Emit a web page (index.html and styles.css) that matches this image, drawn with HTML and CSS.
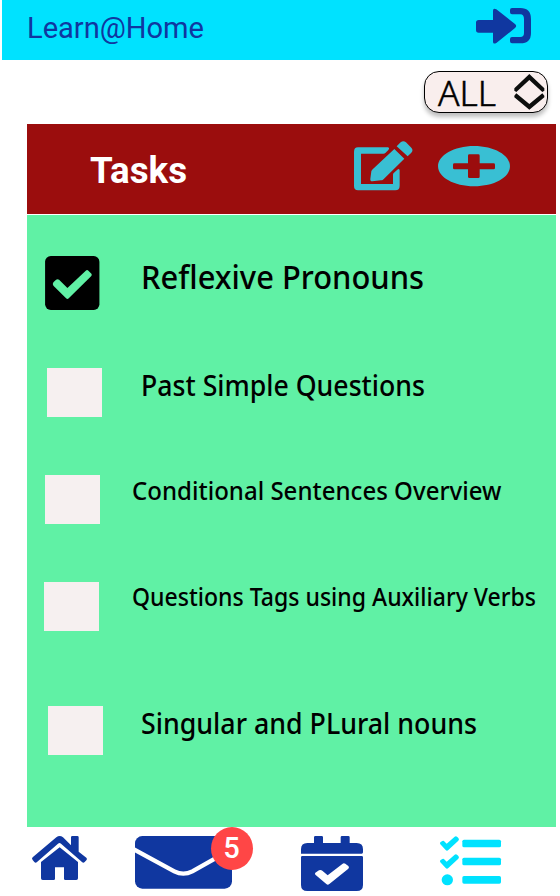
FILE: index.html
```html
<!DOCTYPE html>
<html lang="en">
<head>
<meta charset="utf-8">
<title>Learn@Home</title>
<link rel="stylesheet" href="styles.css">
</head>
<body>
<div class="app">
  <header class="topbar">
    <svg class="brand" width="178" height="40"><text x="-1" y="28" textLength="177" lengthAdjust="spacingAndGlyphs">Learn@Home</text></svg>
    <svg class="login" viewBox="198 24 165 108" width="55" height="36"><path d="M206 60H249V33Q249 22 259 28L315 72Q322 78 315 84L259 129Q249 134 249 125V98H206Q198 98 198 90V68Q198 60 206 60Z"/><path d="M306 24H331Q363 24 363 57V99Q363 130 331 130H306Q300 130 300 124V117Q300 111 306 111H331Q342 111 342 99V57Q342 43 331 43H306Q300 43 300 37V30Q300 24 306 24Z"/></svg>
  </header>
  <div class="filter-row">
    <button class="filter">
      <svg class="filter-label" width="60" height="40"><text x="1" y="34" textLength="58" lengthAdjust="spacingAndGlyphs">ALL</text></svg>
      <svg class="sort" viewBox="311 221 93 107" width="31" height="35.7"><path d="M312 264L357 221L402 264V271L396 275L357 239L318 275L312 271ZM312 286L318 279L357 311L396 279L402 286V291L357 328L312 291Z"/></svg>
    </button>
  </div>
  <main class="panel">
    <div class="panel-head">
      <svg class="title" width="100" height="50"><text x="-1" y="36" textLength="97" lengthAdjust="spacingAndGlyphs">Tasks</text></svg>
      <svg class="edit" viewBox="42 62 177 148" width="59" height="49.3"><path d="M54 81H144Q150 84 145 89L136 98Q134 100 130 100H63V191H159V163Q159 159 162 157L172 148Q177 144 179 150V196Q179 210 166 210H54Q42 210 42 197V94Q42 81 54 81Z"/><path d="M163 86L193 115L129 178Q127 180 123 180L97 183Q90 183 91 175L94 153Q95 150 98 147Z"/><path d="M170 78L182 66Q190 59 198 66L214 82Q221 89 214 97L203 108Z"/></svg>
      <svg class="add" viewBox="294 77 216 121" width="72" height="40.3"><path fill-rule="evenodd" d="M402 77C462 77 510 104 510 138S462 198 402 198S294 171 294 138S342 77 402 77ZM388 102Q384 102 384 106V129H343Q339 129 339 133V143Q339 147 343 147H384V169Q384 173 388 173H415Q419 173 419 169V147H461Q465 147 465 143V133Q465 129 461 129H419V106Q419 102 415 102Z"/></svg>
    </div>
    <ul class="tasks">
      <li class="task task-1"><svg class="checked" viewBox="76 408 163 162" width="54.5" height="54"><rect x="76" y="408" width="163" height="162" rx="17"/><path d="M101 487L109 479Q113 476 118 479L143 504L198 452Q202 448 206 452L215 461Q218 465 214 469L147 535Q143 539 139 535L101 497Q97 492 101 487Z"/></svg><svg class="label" width="290" height="49"><text x="0" y="33" textLength="283" lengthAdjust="spacingAndGlyphs">Reflexive Pronouns</text></svg></li>
      <li class="task task-2"><span class="box"></span><svg class="label" width="290" height="49"><text x="1" y="28" textLength="284" lengthAdjust="spacingAndGlyphs">Past Simple Questions</text></svg></li>
      <li class="task task-3"><span class="box"></span><svg class="label" width="375" height="49"><text x="1" y="25" textLength="369.5" lengthAdjust="spacingAndGlyphs">Conditional Sentences Overview</text></svg></li>
      <li class="task task-4"><span class="box"></span><svg class="label" width="410" height="49"><text x="1" y="24" textLength="404" lengthAdjust="spacingAndGlyphs">Questions Tags using Auxiliary Verbs</text></svg></li>
      <li class="task task-5"><span class="box"></span><svg class="label" width="345" height="49"><text x="1" y="28" textLength="336" lengthAdjust="spacingAndGlyphs">Singular and PLural nouns</text></svg></li>
    </ul>
  </main>
  <nav class="tabs">
    <svg class="home" viewBox="96 63 165 132" width="55" height="44"><path d="M213 91V67Q213 63 217 63H232Q236 63 236 67V110L259 128Q263 132 259 136L254 141Q250 145 246 141L183 86Q179 82 174 86L111 141Q107 145 103 141L98 135Q94 131 98 127L169 67Q179 59 189 67Z"/><path d="M179 97L234 141V190Q234 195 229 195H196Q192 195 192 191V157H165V191Q165 195 161 195H128Q123 195 123 190V141Z"/></svg>
    <div class="mail">
      <svg class="envelope" viewBox="30 63 291 158" width="97" height="52.7"><rect x="30" y="63" width="291" height="158" rx="22"/><path class="fold" d="M26 103L148 169Q175 183 202 169L325 100"/></svg>
      <span class="badge">5</span>
    </div>
    <svg class="calendar" viewBox="48 63 186 165" width="62" height="55"><path d="M48 116V103Q48 84 67 84H87V67Q87 63 91 63H110Q114 63 114 67V84H167V67Q167 63 171 63H190Q194 63 194 67V84H215Q234 84 234 103V112Q234 116 230 116Z"/><path fill-rule="evenodd" d="M52 123H230Q234 123 234 127V210Q234 228 215 228H67Q48 228 48 210V127Q48 123 52 123ZM91 173Q88 177 92 180L124 207Q128 211 133 207L190 161Q194 157 190 153L181 146Q176 143 172 147L128 181L112 167Q107 163 102 166Z"/></svg>
    <svg class="list" viewBox="45 62 183 149" width="61" height="49.7"><path d="M46 87Q43 83 47 80L52 77Q56 75 59 79L65 85L89 64Q93 61 97 65L100 68Q104 72 100 76L70 104Q66 108 62 104Z"/><path d="M46 141Q43 137 47 134L52 131Q56 129 59 133L65 139L89 118Q93 115 97 119L100 122Q104 126 100 130L70 158Q66 162 62 158Z"/><ellipse cx="67" cy="193.500" rx="17" ry="16.500"/><rect x="112" y="73" width="116" height="23" rx="5"/><rect x="112" y="127" width="116" height="23" rx="5"/><rect x="112" y="182" width="116" height="23" rx="5"/></svg>
  </nav>
</div>
</body>
</html>
```
FILE: styles.css
```css
* { box-sizing: border-box; }
body { margin: 0; background: #fff; }
svg { display: block; flex: none; overflow: visible; }
.app { width: 560px; height: 896px; overflow: hidden; display: flex; flex-direction: column; }
.topbar { height: 60px; margin-left: 2px; padding: 8px 29px 0 26px; display: flex; justify-content: space-between; background: #00e2ff; }
.brand { margin-top: 2px; font: 400 30px Roboto, sans-serif; fill: #1037a0; }
.login { fill: #1037a0; }
.filter-row { height: 64px; padding: 11px 12px 0 0; display: flex; justify-content: flex-end; }
.filter { width: 124px; height: 42px; margin: 0; padding: 0 2px 0 12px; display: flex; align-items: flex-start; justify-content: space-between; border: 1px solid #000; border-radius: 15px; background: #f9eeed; box-shadow: 0 4px 4px rgba(0,0,0,.25); }
.filter-label { font: 300 34.500px "Noto Sans", sans-serif; fill: #000; stroke: #000; stroke-width: .5px; }
.sort { margin-top: 2px; fill: #0d0e0d; }
.panel { width: 529px; margin-left: 27px; }
.panel-head { height: 90px; padding: 18px 46px 0 64px; display: flex; background: #9b0d0d; }
.title { margin-top: 5px; font: 700 37px Roboto, sans-serif; fill: #fff; }
.edit { margin: -1.500px 0 0 163px; fill: #39bfd3; }
.add { margin: 3.500px 0 0 25px; fill: #39bfd3; }
.tasks { height: 612px; margin: 1px 0 0; padding: 41px 0 0; list-style: none; background: #60f1a5; }
.task { display: flex; height: 49px; margin-bottom: 58px; font: 500 28.500px "Noto Sans", sans-serif; }
.box { flex: none; width: 55px; height: 49px; background: #f6f0f0; }
.checked path { fill: #60f1a5; }
.task-1 { height: 54px; padding-left: 18.300px; font-size: 33px; }
.task-1 .label { margin-left: 41px; }
.task-2 { padding-left: 20.400px; }
.task-2 .label { margin-left: 38px; }
.task-3 { padding-left: 18.400px; font-size: 25.500px; }
.task-3 .label { margin-left: 31px; }
.task-4 { padding-left: 17.400px; margin-bottom: 75px; font-size: 25px; }
.task-4 .label { margin-left: 32px; }
.task-5 { padding-left: 21.400px; margin-bottom: 0; }
.task-5 .label { margin-left: 37px; }
.tabs { height: 69px; padding: 9px 0 0 32px; display: flex; align-items: flex-start; fill: #1037a0; }
.mail { position: relative; margin-left: 48px; }
.envelope { overflow: hidden; }
.fold { fill: none; stroke: #fff; stroke-width: 13px; }
.badge { position: absolute; left: 76px; top: -9px; width: 42px; height: 43px; border-radius: 50%; background: #ff4646; color: #fff; font: 500 29px/43px Roboto, sans-serif; text-align: center; text-indent: -1px; }
.calendar { margin-left: 69px; }
.list { margin-left: 77px; fill: #00e2ff; }
```
